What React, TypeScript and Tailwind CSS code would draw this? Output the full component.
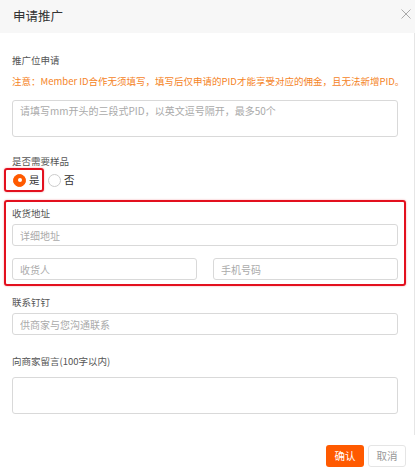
import { useState } from "react";

const font = { fontFamily: '"Noto Sans CJK SC", "Noto Sans", sans-serif' };

function Label({ children }: { children: React.ReactNode }) {
  return <p className="text-[9.5px] leading-[14px] text-[#555]">{children}</p>;
}

function Input({ placeholder, className = "" }: { placeholder: string; className?: string }) {
  return (
    <input
      placeholder={placeholder}
      className={`h-[22px] w-full rounded-[3px] border border-[#d9d9d9] px-[7px] text-[10px] text-[#333] outline-none placeholder:text-[#aaa] ${className}`}
    />
  );
}

function Radio({ checked, label, onClick }: { checked: boolean; label: string; onClick: () => void }) {
  return (
    <label className="flex cursor-pointer items-center gap-[3px] text-[10.5px] text-[#333]" onClick={onClick}>
      <span
        className={`flex h-[13px] w-[13px] items-center justify-center rounded-full border ${
          checked ? "border-[#ff5a00] bg-[#ff5a00]" : "border-[#ccc] bg-white"
        }`}
      >
        {checked ? <span className="h-[4px] w-[4px] rounded-full bg-white" /> : null}
      </span>
      {label}
    </label>
  );
}

export default function App() {
  const [needSample, setNeedSample] = useState(true);

  return (
    <div className="h-[469px] w-[415px] overflow-hidden bg-white" style={font}>
      <div className="flex h-[33px] items-center justify-between bg-[#f7f7f7] pl-[13px] pr-[4px]">
        <h1 className="text-[12.5px] text-[#333]">申请推广</h1>
        <svg width="10" height="10" viewBox="0 0 10 10" className="mt-[-5px]">
          <path d="M0.5 0.5L9.5 9.5M9.5 0.5L0.5 9.5" stroke="#aaa" strokeWidth="1" />
        </svg>
      </div>

      <div className="h-[402px] border-r border-[#e6e6e6] pl-3 pr-[16px] pt-[20px]">
        <Label>推广位申请</Label>
        <p className="mt-[7px] whitespace-nowrap text-[9.5px] leading-[14px] text-[#f5841f]">
          注意：Member ID合作无须填写，填写后仅申请的PID才能享受对应的佣金，且无法新增PID。
        </p>
        <textarea
          placeholder="请填写mm开头的三段式PID，以英文逗号隔开，最多50个"
          className="mt-[12px] block h-[37px] w-full resize-none rounded-[3px] border border-[#d9d9d9] px-[7px] py-[3px] text-[10px] leading-[14px] outline-none placeholder:text-[#aaa]"
        />

        <div className="mt-[17px]">
          <Label>是否需要样品</Label>
        </div>
        <div className="flex items-center gap-[4px]">
          <div className="-ml-[8px] flex h-[24px] w-[40px] items-center rounded-[3px] border-2 border-[#e3101e] pl-[7px] shadow-[0_0_2px_rgba(227,16,30,0.4)]">
            <Radio checked={needSample} label="是" onClick={() => setNeedSample(true)} />
          </div>
          <Radio checked={!needSample} label="否" onClick={() => setNeedSample(false)} />
        </div>

        <div className="-ml-[8px] -mr-[8px] mt-[8px] h-[86px] rounded-[3px] border-2 border-[#e3101e] px-[6px] pt-[4px] shadow-[0_0_2px_rgba(227,16,30,0.4)]">
          <Label>收货地址</Label>
          <Input placeholder="详细地址" className="mt-[4px]" />
          <div className="mt-[12px] flex gap-[16px]">
            <Input placeholder="收货人" />
            <Input placeholder="手机号码" />
          </div>
        </div>

        <div className="mt-[9px]">
          <Label>联系钉钉</Label>
        </div>
        <Input placeholder="供商家与您沟通联系" className="mt-[4px]" />

        <div className="mt-[19px]">
          <Label>向商家留言(100字以内)</Label>
        </div>
        <textarea className="mt-[9px] block h-[37px] w-full resize-none rounded-[3px] border border-[#d9d9d9] px-[7px] text-[10px] outline-none" />
      </div>

      <div className="flex justify-end gap-[4px] pr-[9px] pt-[10px]">
        <button className="h-[22px] w-[38px] rounded-[3px] bg-[#ff5a00] text-[10.5px] text-white">
          确认
        </button>
        <button className="h-[22px] w-[38px] rounded-[3px] border border-[#e5e5e5] bg-white text-[10.5px] text-[#999]">
          取消
        </button>
      </div>
    </div>
  );
}
